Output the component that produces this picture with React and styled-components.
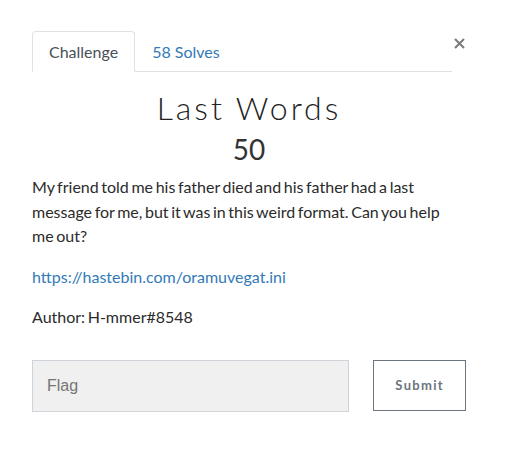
import React from 'react'
import styled, { createGlobalStyle } from 'styled-components'

const Global = createGlobalStyle`
  body {
    margin: 0;
    background: #fff;
    font-family: Lato, "Open Sans", sans-serif;
    color: #212529;
  }
`

const Page = styled.div`
  width: 434px;
  padding: 31px 0 0 32px;
`

const TopBar = styled.div`
  display: flex;
  align-items: flex-start;
`

const Tabs = styled.ul`
  display: flex;
  list-style: none;
  margin: 0;
  padding: 0;
  width: 420px;
  border-bottom: 1px solid #dee2e6;
`

const Tab = styled.li`
  margin-bottom: -1px;
  padding: 8px 16px;
  font-size: 16px;
  line-height: 23px;
  border: 1px solid ${p => (p.active ? '#dee2e6' : 'transparent')};
  border-bottom-color: ${p => (p.active ? '#fff' : 'transparent')};
  border-top-left-radius: 4px;
  border-top-right-radius: 4px;
  background: ${p => (p.active ? '#fff' : 'transparent')};
  color: ${p => (p.active ? '#495057' : '#337ab7')};
`

const Close = styled.button`
  margin-left: auto;
  border: 0;
  background: none;
  padding: 0;
  margin-top: 5px;
  width: 14px;
  height: 16px;
  color: #7a7a7a;
  cursor: pointer;
`

const Title = styled.h2`
  margin: 16px 0 0;
  text-align: center;
  font-weight: 300;
  font-size: 32px;
  letter-spacing: 3px;
  line-height: 40px;
  color: #222;
`

const Points = styled.h3`
  margin: 3px 0 0;
  text-align: center;
  font-weight: 400;
  font-size: 28px;
  line-height: 36px;
  color: #333;
`

const Text = styled.p`
  max-width: 424px;
  margin: ${p => p.gap || 0}px 0 0;
  font-size: 16px;
  word-spacing: -1.5px;
  line-height: 24.5px;
  color: #2b2b2b;
`

const Link = styled.a`
  color: #337ab7;
  text-decoration: none;
`

const FlagRow = styled.div`
  display: flex;
  gap: 24px;
  margin-top: 30px;
`

const FlagInput = styled.input`
  box-sizing: border-box;
  width: 318px;
  height: 52px;
  padding: 0 14px;
  border: 1px solid #ced4da;
  background: #f0f0f0;
  font-family: "Liberation Sans", Arial, sans-serif;
  font-size: 16px;
  color: #495057;
  &::placeholder {
    color: #757575;
  }
`

const Submit = styled.button`
  box-sizing: border-box;
  width: 93px;
  height: 51px;
  border: 1px solid #6c757d;
  background: #fff;
  font-family: Lato, sans-serif;
  font-weight: 700;
  font-size: 13px;
  letter-spacing: 1.3px;
  color: #6c757d;
`

export default function App() {
  return (
    <Page>
      <Global />
      <TopBar>
        <Tabs>
          <Tab active>Challenge</Tab>
          <Tab>58 Solves</Tab>
        </Tabs>
        <Close aria-label="Close">
          <svg width="11" height="11" viewBox="0 0 11 11">
            <path d="M1 1L10 10M10 1L1 10" stroke="currentColor" strokeWidth="2" />
          </svg>
        </Close>
      </TopBar>
      <Title>Last Words</Title>
      <Points>50</Points>
      <Text gap={8}>
        My friend told me his father died and his father had a last message for me, but it was in this weird format. Can you help me out?
      </Text>
      <Text gap={16}>
        <Link href="#">https://hastebin.com/oramuvegat.ini</Link>
      </Text>
      <Text gap={16}>Author: H-mmer#8548</Text>
      <FlagRow>
        <FlagInput placeholder="Flag" />
        <Submit>Submit</Submit>
      </FlagRow>
    </Page>
  )
}
